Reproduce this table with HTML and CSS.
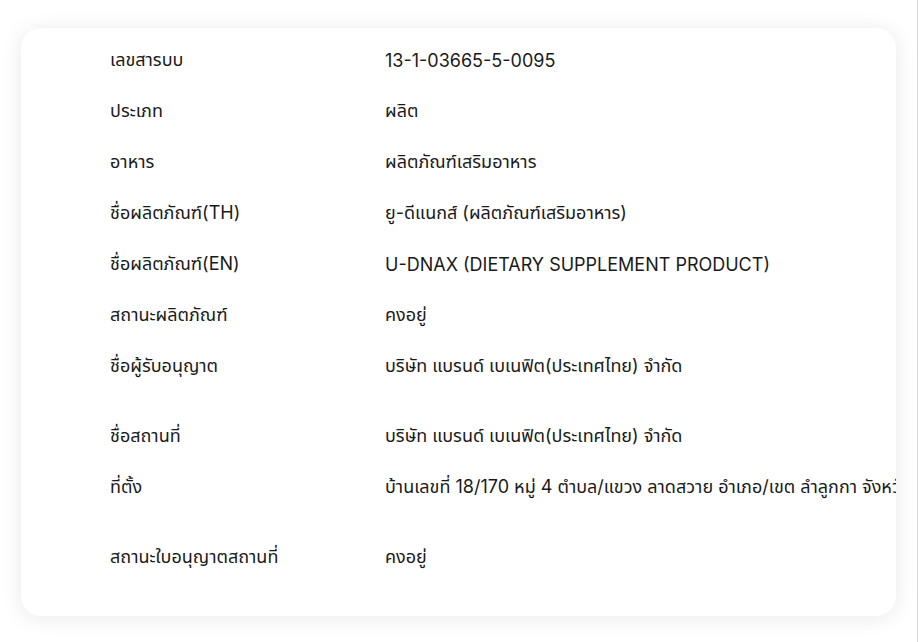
FILE: index.html
```html
<!DOCTYPE html>
<html lang="th">
<head>
    <meta charset="UTF-8">
    <meta name="viewport" content="width=device-width, initial-scale=1.0">
    <title>ข้อมูลผลิตภัณฑ์</title>
    <link rel="stylesheet" href="styles.css">
</head>
<body>
    <main class="page">
        <section class="info-card">
            <div class="info-row">
                <div class="info-label">เลขสารบบ</div>
                <div class="info-value">13-1-03665-5-0095</div>
            </div>
            <div class="info-row">
                <div class="info-label">ประเภท</div>
                <div class="info-value">ผลิต</div>
            </div>
            <div class="info-row">
                <div class="info-label">อาหาร</div>
                <div class="info-value">ผลิตภัณฑ์เสริมอาหาร</div>
            </div>
            <div class="info-row">
                <div class="info-label">ชื่อผลิตภัณฑ์(TH)</div>
                <div class="info-value">ยู-ดีแนกส์ (ผลิตภัณฑ์เสริมอาหาร)</div>
            </div>
            <div class="info-row">
                <div class="info-label">ชื่อผลิตภัณฑ์(EN)</div>
                <div class="info-value">U-DNAX (DIETARY SUPPLEMENT PRODUCT)</div>
            </div>
            <div class="info-row">
                <div class="info-label">สถานะผลิตภัณฑ์</div>
                <div class="info-value">คงอยู่</div>
            </div>
            <div class="info-row spaced">
                <div class="info-label">ชื่อผู้รับอนุญาต</div>
                <div class="info-value">บริษัท แบรนด์ เบเนฟิต(ประเทศไทย) จำกัด</div>
            </div>
            <div class="info-row">
                <div class="info-label">ชื่อสถานที่</div>
                <div class="info-value">บริษัท แบรนด์ เบเนฟิต(ประเทศไทย) จำกัด</div>
            </div>
            <div class="info-row spaced">
                <div class="info-label">ที่ตั้ง</div>
                <div class="info-value">บ้านเลขที่ 18/170 หมู่ 4 ตำบล/แขวง ลาดสวาย อำเภอ/เขต ลำลูกกา จังหวัด ปทุมธานี 12150</div>
            </div>
            <div class="info-row">
                <div class="info-label">สถานะใบอนุญาตสถานที่</div>
                <div class="info-value">คงอยู่</div>
            </div>
        </section>
    </main>
</body>
</html>
```

FILE: styles.css
```css
body {
    margin: 0;
    padding: 0;
    background-color: #fff;
    color: #1a1a1a;
    font-family: Inter, "Noto Sans Thai", "Noto Sans", sans-serif;
    font-size: 18px;
}
body::after {
    content: "";
    position: fixed;
    top: 0;
    right: 0;
    bottom: 0;
    width: 1px;
    background: #d6d6d6;
}
.page {
    padding: 28px 22px 28px 21px;
}
.info-card {
    background: #fff;
    border-radius: 20px;
    box-shadow: 0 2px 22px rgba(0, 0, 0, 0.09);
    padding: 7px 0 33px 89px;
    overflow: hidden;
}
.info-row {
    display: grid;
    grid-template-columns: 275px 1fr;
    align-items: center;
    height: 51px;
    white-space: nowrap;
}
.info-row.spaced {
    margin-bottom: 19px;
}
```
